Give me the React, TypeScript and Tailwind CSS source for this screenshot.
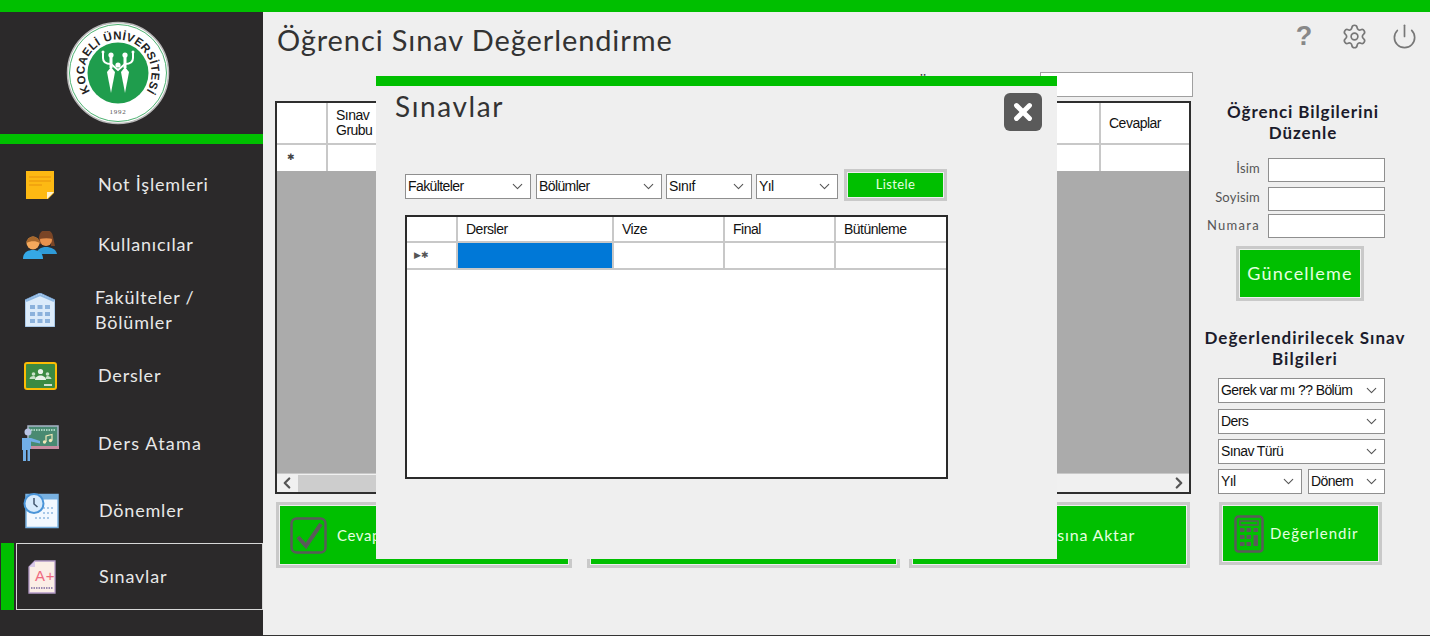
import React from "react";
import { ChevronDown, ChevronLeft, ChevronRight, Settings, Power, X } from "lucide-react";

function NoteIcon() {
  return (
    <svg width="28" height="28" viewBox="0 0 28 28">
      <path d="M0 0H28V22L22 28H0Z" fill="#fdb913" />
      <path d="M3 6H25M3 10H25M3 14H16" stroke="#e8920c" strokeWidth="1.2" />
      <path d="M21 28V21H28Z" fill="#fdf1cf" />
    </svg>
  );
}

function UsersIcon() {
  return (
    <svg width="34" height="28" viewBox="0 0 34 28">
      <path d="M16 6a7 7 0 0 1 14 0l2 9h-4V8h-9v5h-4Z" fill="#7a4526" />
      <circle cx="23" cy="9" r="6" fill="#e8924e" />
      <path d="M16 8a7 7 0 0 1 14 0c-4-1-9-1-14 0Z" fill="#7a4526" />
      <path d="M14 23c0-5 4-7 9-7s10 2 11 7Z" fill="#2f9bd8" />
      <circle cx="10" cy="12" r="6.500" fill="#f5a95c" />
      <path d="M3.500 12a6.500 6.500 0 0 1 13 0c-3-2.500-9-2.500-13 0Z" fill="#a8682c" />
      <path d="M0 28c0-6 4-9 10-9s10 3 10 9Z" fill="#35a8e6" />
    </svg>
  );
}

function BuildingIcon() {
  const cells = [8, 15, 22];
  return (
    <svg width="30" height="34" viewBox="0 0 30 34">
      <path d="M0 7L15 0L30 7V34H0Z" fill="#dcebfa" stroke="#78a6d8" strokeWidth="1" />
      <path d="M1 8L15 2L29 8" fill="none" stroke="#8fb8e2" strokeWidth="2" />
      {cells.map((y) => (
        <g key={y} fill="#8cb2dc">
          <rect x="5" y={y + 4} width="5" height="4" />
          <rect x="12.5" y={y + 4} width="5" height="4" />
          <rect x="20" y={y + 4} width="5" height="4" />
        </g>
      ))}
    </svg>
  );
}

function ClassroomIcon() {
  return (
    <svg width="33" height="28" viewBox="0 0 33 28">
      <rect x="1" y="1" width="31" height="26" rx="2" fill="#3b8a42" stroke="#fbbc05" strokeWidth="2" />
      <circle cx="16.5" cy="9.5" r="2.6" fill="#e8f2e8" />
      <circle cx="9.5" cy="12" r="1.8" fill="#c8e0c8" />
      <circle cx="23.5" cy="12" r="1.8" fill="#c8e0c8" />
      <path d="M11 18c0-3 3-4.5 5.500-4.500S22 15 22 18Z" fill="#e8f2e8" />
      <path d="M5.500 17c0-2 2-3 4-3s2 1 2 3ZM21.500 17c0-2 1-3 2-3s4 1 4 3Z" fill="#c8e0c8" />
      <rect x="20" y="22" width="8" height="2" fill="#cfe3cf" />
    </svg>
  );
}

function TeacherIcon() {
  return (
    <svg width="38" height="36" viewBox="0 0 38 36">
      <rect x="7" y="1" width="30" height="21" fill="#4a8a72" stroke="#a8b4c8" strokeWidth="1.500" />
      <rect x="7" y="21" width="31" height="3" fill="#c88ca0" />
      <path d="M10 5H34" stroke="#a8d4c0" strokeWidth="2" strokeDasharray="1.500 1" />
      <path d="M25 17v-6l6-1.500v6" fill="none" stroke="#f2e8b8" strokeWidth="1.200" />
      <circle cx="23.500" cy="17" r="1.700" fill="#f2e8b8" />
      <circle cx="29.500" cy="15.500" r="1.700" fill="#f2e8b8" />
      <circle cx="7" cy="7" r="3.500" fill="#b8c4e4" />
      <path d="M1 13h9l9 3v2.500l-9-2V24H9v12H6.500V25H5v11H2V25H1Z" fill="#72aee6" />
    </svg>
  );
}

function CalendarIcon() {
  return (
    <svg width="36" height="36" viewBox="0 0 36 36">
      <rect x="3" y="1.500" width="32" height="33" fill="#f2f8ff" stroke="#78b0e0" strokeWidth="1.500" />
      <rect x="3" y="1.500" width="32" height="5" fill="#78b0e0" />
      <g fill="#a8c8e8">
        <rect x="20" y="14" width="2" height="2" /><rect x="24" y="14" width="2" height="2" /><rect x="28" y="14" width="2" height="2" />
        <rect x="20" y="19" width="2" height="2" /><rect x="24" y="19" width="2" height="2" /><rect x="28" y="19" width="2" height="2" />
        <rect x="12" y="24" width="2" height="2" /><rect x="16" y="24" width="2" height="2" /><rect x="20" y="24" width="2" height="2" /><rect x="24" y="24" width="2" height="2" />
      </g>
      <circle cx="11" cy="10.500" r="9.500" fill="#d6eafc" stroke="#4a94d8" strokeWidth="2" />
      <path d="M11 5v6l3.500 3" fill="none" stroke="#41566e" strokeWidth="1.500" />
    </svg>
  );
}

function ExamIcon() {
  return (
    <svg width="28" height="34" viewBox="0 0 28 34">
      <path d="M7 1H27V33H1V7Z" fill="#fbeee6" stroke="#b49ac8" strokeWidth="1.300" />
      <path d="M7 1V7H1Z" fill="#d8c8e8" />
      <text x="7" y="21" fontSize="15" fill="#ef6a80" fontFamily="Liberation Sans, sans-serif">A+</text>
      <path d="M3 28H25" stroke="#9a8ab0" strokeWidth="2" strokeDasharray="1.500 1" />
    </svg>
  );
}

function Logo() {
  return (
    <svg width="104" height="104" viewBox="0 0 104 104">
      <circle cx="52" cy="52" r="50.500" fill="#fff" stroke="#b8b8b8" strokeWidth="1.500" />
      <circle cx="52" cy="52" r="48.500" fill="none" stroke="#1f9d4d" strokeWidth="0.800" />
      <circle cx="52" cy="52" r="30.500" fill="#1f9d4d" />
      <defs>
        <path id="logo-arc" d="M24.100 70.600A33.500 33.500 0 1 1 79.900 70.600" />
      </defs>
      <text fontSize="11.500" fontWeight="700" fill="#232323" fontFamily="Liberation Sans, sans-serif">
        <textPath href="#logo-arc" textLength="144" lengthAdjust="spacing">
          KOCAELİ ÜNİVERSİTESİ
        </textPath>
      </text>
      <text x="52" y="93" textAnchor="middle" fontSize="7" fill="#555" fontFamily="Liberation Serif, serif">
        1992
      </text>
      <g fill="#fff">
        <circle cx="45" cy="34" r="2.600" />
        <circle cx="59" cy="34" r="2.600" />
        <circle cx="52" cy="44" r="2.600" />
        <circle cx="37" cy="31" r="1.500" />
        <circle cx="67" cy="31" r="1.500" />
        <path d="M45 46L49 51L45 72L41 51Z" />
        <path d="M59 46L63 51L59 72L55 51Z" />
      </g>
      <path
        d="M37 31V37C37 42 42 43 45 43L52 49L59 43C62 43 67 42 67 37V31"
        fill="none"
        stroke="#fff"
        strokeWidth="2"
      />
      <path d="M45 36V47M59 36V47" fill="none" stroke="#fff" strokeWidth="3" />
    </svg>
  );
}

function CalculatorIcon() {
  return (
    <svg width="30" height="38" viewBox="0 0 30 38" className="shrink-0">
      <rect x="1.500" y="1.500" width="27" height="35" rx="3" fill="none" stroke="#5a5a5a" strokeWidth="2.500" />
      <rect x="6" y="6" width="18" height="4" fill="none" stroke="#5a5a5a" strokeWidth="1.500" />
      <g fill="#5a5a5a">
        <rect x="6" y="13" width="4.500" height="4" /><rect x="12.500" y="13" width="4.500" height="4" /><rect x="19.500" y="13" width="4.500" height="4" />
        <rect x="6" y="20" width="4.500" height="4" /><rect x="12.500" y="20" width="4.500" height="4" /><rect x="19.500" y="20" width="4.500" height="11" />
        <rect x="6" y="27" width="4.500" height="4" /><rect x="12.500" y="27" width="4.500" height="4" />
      </g>
    </svg>
  );
}

function CheckIcon() {
  return (
    <svg width="38" height="37" viewBox="0 0 38 37" className="shrink-0">
      <rect x="1.500" y="1.500" width="34" height="34" rx="5" fill="none" stroke="#5a5a5a" strokeWidth="2.500" />
      <path d="M8 20L16 29L31 7" fill="none" stroke="#5a5a5a" strokeWidth="4" />
    </svg>
  );
}

type ComboProps = { label: string; className: string };

function Combo({ label, className }: ComboProps) {
  return (
    <div
      className={`flex h-[25px] shrink-0 items-center justify-between border border-[#8f8f8f] bg-white pr-[4px] pl-[2px] font-['Liberation_Sans',sans-serif] text-[14px] tracking-[-0.6px] text-[#111] ${className}`}
    >
      <span className="whitespace-nowrap">{label}</span>
      <ChevronDown className="size-[17px] shrink-0 text-[#555]" strokeWidth={1.500} />
    </div>
  );
}

type NavItemProps = {
  label: React.ReactNode;
  icon: React.ReactNode;
  rowClass: string;
  iconClass: string;
  textClass?: string;
  active?: boolean;
};

function NavItem({ label, icon, rowClass, iconClass, textClass = "pb-[2px]", active = false }: NavItemProps) {
  return (
    <div className={`flex ${rowClass}`}>
      <div className={`ml-px w-[13px] shrink-0 ${active ? "bg-[#00bf00]" : ""}`} />
      <div className={`ml-[2px] flex flex-1 items-center border ${active ? "border-[#d8d8d8]" : "border-transparent"}`}>
        <div className={`flex w-[81px] shrink-0 ${iconClass}`}>{icon}</div>
        <div className={`text-[#e8e8e8] ${textClass}`}>{label}</div>
      </div>
    </div>
  );
}

function GreenButton({ className, innerClass, children }: { className: string; innerClass?: string; children?: React.ReactNode }) {
  return (
    <div className={`shrink-0 border-[3px] border-[#c9c9c9] p-px ${className}`}>
      <div className={`flex h-full items-center bg-[#00bf00] text-[#e6ffe0] ${innerClass ?? ""}`}>{children}</div>
    </div>
  );
}

function TextInput({ label, className, labelClass }: { label: string; className: string; labelClass: string }) {
  return (
    <div className={`flex h-[24px] items-center justify-end gap-[8px] ${className}`}>
      <span className={`text-[13px] text-[#555] ${labelClass}`}>{label}</span>
      <div className="h-[24px] w-[117px] border border-[#8f8f8f] bg-white" />
    </div>
  );
}

export default function App(): React.JSX.Element {
  return (
    <div className="relative flex h-[636px] w-[1430px] flex-col overflow-hidden bg-[#efefef] font-['Lato',sans-serif]">
      {/* Top bar */}
      <div className="h-[12px] shrink-0 bg-[#00bf00]" />

      <div className="flex flex-1">
        {/* Sidebar */}
        <aside className="w-[263px] shrink-0 bg-[#2b292a] text-[18px] tracking-[0.8px]">
          <div className="flex h-[122px] items-center pl-[66px]">
            <Logo />
          </div>
          <div className="mb-[11px] h-[10px] bg-[#00bf00]" />
          <NavItem label="Not İşlemleri" icon={<NoteIcon />} rowClass="h-[60px]" iconClass="pl-[9px]" />
          <NavItem label="Kullanıcılar" icon={<UsersIcon />} rowClass="h-[60px]" iconClass="pl-[6px]" />
          <NavItem
            label={
              <>
                Fakülteler /<br />
                Bölümler
              </>
            }
            icon={<BuildingIcon />}
            rowClass="h-[69px]"
            iconClass="pl-[8px]"
            textClass="-ml-[3px] leading-[25px]"
          />
          <NavItem label="Dersler" icon={<ClassroomIcon />} rowClass="h-[64px]" iconClass="pl-[7px]" />
          <NavItem label="Ders Atama" icon={<TeacherIcon />} rowClass="h-[70px]" iconClass="pl-[4px]" textClass="tracking-[1.200px]" />
          <NavItem label="Dönemler" icon={<CalendarIcon />} rowClass="h-[65px]" iconClass="pl-[6px]" textClass="ml-px" />
          <NavItem label="Sınavlar" icon={<ExamIcon />} rowClass="h-[67px]" iconClass="pl-[11px]" textClass="ml-px" active />
        </aside>

        {/* Main */}
        <main className="flex flex-1 flex-col border-b border-[#333]">
          <header className="flex h-[60px] shrink-0 items-start justify-between pr-[12px]">
            <h1 className="mt-[10px] ml-[14px] text-[29px] leading-[36px] tracking-[0.9px] text-[#333]">Öğrenci Sınav Değerlendirme</h1>
            <div className="mt-[10px] flex items-center">
              <span className="ml-[2px] w-[20px] text-center font-['Liberation_Sans',sans-serif] text-[27px] leading-[28px] font-bold text-[#888]">?</span>
              <Settings className="ml-[27px] size-[27px] text-[#777]" strokeWidth={1.500} />
              <Power className="ml-[23px] size-[27px] text-[#777]" strokeWidth={1.500} />
            </div>
          </header>

          <div className="flex flex-1">
            {/* Left column */}
            <div className="ml-[12px] flex w-[916px] shrink-0 flex-col">
              <div className="flex h-[25px] items-start justify-end gap-[5px]">
                <span className="text-[15px] leading-[20px] text-[#333]">Öğrenci Numarası</span>
                <div className="-mr-[2px] h-[25px] w-[153px] border border-[#a0a0a0] bg-white" />
              </div>

              <div className="mt-[4px] flex h-[393px] flex-col border-2 border-[#2e2e2e] bg-[#ababab] font-['Liberation_Sans',sans-serif] text-[14px] tracking-[-0.5px] text-[#111]">
                <div className="flex h-[42px] bg-white">
                  <div className="w-[51px] border-r-2 border-b-2 border-[#c8c8c8]" />
                  <div className="flex w-[80px] items-center border-r-2 border-b-2 border-[#c8c8c8] pl-[8px] leading-[15px]">
                    Sınav
                    <br />
                    Grubu
                  </div>
                  <div className="flex-1 border-r-2 border-b-2 border-[#c8c8c8]" />
                  <div className="flex w-[88px] items-center border-b-2 border-[#c8c8c8] pl-[8px]">Cevaplar</div>
                </div>
                <div className="flex h-[26px] bg-white">
                  <div className="flex w-[51px] items-center border-r-2 border-[#c8c8c8] pl-[10px] text-[9px] text-[#444]">✱</div>
                  <div className="w-[80px] border-r-2 border-[#c8c8c8]" />
                  <div className="flex-1 border-r-2 border-[#c8c8c8]" />
                  <div className="w-[88px]" />
                </div>
                <div className="flex-1" />
                {/* Scrollbar */}
                <div className="flex h-[19px] items-center border-t border-[#c8c8c8] bg-[#f0f0f0]">
                  <ChevronLeft className="ml-[1px] size-[18px] shrink-0 text-[#555]" strokeWidth={3} />
                  <div className="ml-[2px] h-[17px] w-[700px] bg-[#cdcdcd]" />
                  <div className="flex-1" />
                  <ChevronRight className="mr-[1px] size-[18px] shrink-0 text-[#555]" strokeWidth={3} />
                </div>
              </div>

              <div className="mt-[8px] flex h-[66px] items-stretch">
                <GreenButton className="ml-[1px] w-[296px]" innerClass="pl-[10px] gap-[9px] text-[15px] tracking-[0.6px]">
                  <CheckIcon />
                  <span className="whitespace-nowrap">Cevapları Kontrol Et</span>
                </GreenButton>
                <GreenButton className="ml-[15px] w-[313px]" />
                <GreenButton className="ml-[9px] w-[281px]" innerClass="justify-center text-[16px] tracking-[0.8px]">
                  <span className="whitespace-nowrap">Excel Dosyasına Aktar</span>
                </GreenButton>
              </div>
            </div>

            {/* Right column */}
            <div className="flex w-[239px] flex-col pt-[29px] pr-[45px]">
              <h2 className="ml-[20px] -mr-[10px] text-center text-[17px] leading-[21px] font-bold tracking-[0.9px] whitespace-nowrap text-[#1b1b2b]">
                Öğrenci Bilgilerini
                <br />
                Düzenle
              </h2>
              <div className="mt-[15px] flex flex-col">
                <TextInput label="İsim" className="mb-[5px]" labelClass="pb-[3px] tracking-[0.2px]" />
                <TextInput label="Soyisim" className="mb-[3px]" labelClass="pb-[3px] tracking-[0.2px]" />
                <TextInput label="Numara" className="" labelClass="tracking-[1.300px]" />
              </div>
              <GreenButton className="mt-[8px] ml-[45px] h-[55px] w-[128px]" innerClass="justify-center text-[18px] tracking-[1.200px]">
                Güncelleme
              </GreenButton>
              <h2 className="mt-[26px] ml-[10px] -mr-[24px] text-center text-[17px] leading-[21px] font-bold tracking-[1px] whitespace-nowrap text-[#1b1b2b]">
                Değerlendirilecek Sınav
                <br />
                Bilgileri
              </h2>
              <div className="mt-[9px] ml-[27px] flex flex-col gap-[5px]">
                <Combo label="Gerek var mı ?? Bölüm" className="w-[167px]" />
                <Combo label="Ders" className="mt-px w-[167px]" />
                <Combo label="Sınav Türü" className="w-[167px]" />
                <div className="flex gap-[6px]">
                  <Combo label="Yıl" className="w-[84px]" />
                  <Combo label="Dönem" className="w-[77px]" />
                </div>
              </div>
              <GreenButton className="mt-[8px] ml-[28px] h-[63px] w-[163px]" innerClass="pl-[11px] gap-[6px] text-[15px] tracking-[1px]">
                <CalculatorIcon />
                Değerlendir
              </GreenButton>
            </div>
          </div>
        </main>
      </div>

      {/* Sınavlar modal */}
      <div className="absolute top-[76px] left-[376px] flex h-[483px] w-[681px] flex-col bg-[#efefef]">
        <div className="h-[10px] shrink-0 bg-[#00bf00]" />
        <div className="flex h-[83px] shrink-0 items-start justify-between pr-[15px] pl-[19px]">
          <h2 className="mt-[2px] text-[28px] leading-[36px] tracking-[1.600px] text-[#333]">Sınavlar</h2>
          <button className="mt-[7px] flex size-[38px] items-center justify-center rounded-[6px] bg-[#5a5a5a]">
            <X className="size-[26px] text-white" strokeWidth={4.500} />
          </button>
        </div>

        <div className="flex h-[32px] shrink-0 items-center pl-[29px]">
          <Combo label="Fakülteler" className="mt-[3px] w-[126px]" />
          <Combo label="Bölümler" className="mt-[3px] ml-[5px] w-[126px]" />
          <Combo label="Sınıf" className="mt-[3px] ml-[4px] w-[86px]" />
          <Combo label="Yıl" className="mt-[3px] ml-[4px] w-[82px]" />
          <GreenButton className="ml-[6px] h-[32px] w-[103px]" innerClass="justify-center text-[13px] tracking-[0.4px]">
            Listele
          </GreenButton>
        </div>

        <div className="mt-[14px] ml-[29px] flex h-[264px] w-[543px] flex-col border-2 border-[#2a2a2a] bg-white font-['Liberation_Sans',sans-serif] text-[14px] tracking-[-0.5px] text-[#111]">
          <div className="flex h-[26px] shrink-0">
            <div className="w-[51px] border-r-2 border-b-2 border-[#c8c8c8]" />
            <div className="flex w-[156px] items-center border-r-2 border-b-2 border-[#c8c8c8] pl-[8px]">Dersler</div>
            <div className="flex w-[111px] items-center border-r-2 border-b-2 border-[#c8c8c8] pl-[8px]">Vize</div>
            <div className="flex w-[111px] items-center border-r-2 border-b-2 border-[#c8c8c8] pl-[8px]">Final</div>
            <div className="flex flex-1 items-center border-b-2 border-[#c8c8c8] pl-[8px]">Bütünleme</div>
          </div>
          <div className="flex h-[27px] shrink-0">
            <div className="flex w-[51px] items-center border-r-2 border-b-2 border-[#c8c8c8] pl-[7px] text-[9px] leading-none text-[#555]">▶✱</div>
            <div className="w-[156px] border-r-2 border-b-2 border-[#c8c8c8] bg-[#0078d7]" />
            <div className="w-[111px] border-r-2 border-b-2 border-[#c8c8c8]" />
            <div className="w-[111px] border-r-2 border-b-2 border-[#c8c8c8]" />
            <div className="flex-1 border-b-2 border-[#c8c8c8]" />
          </div>
        </div>
      </div>
    </div>
  );
}
